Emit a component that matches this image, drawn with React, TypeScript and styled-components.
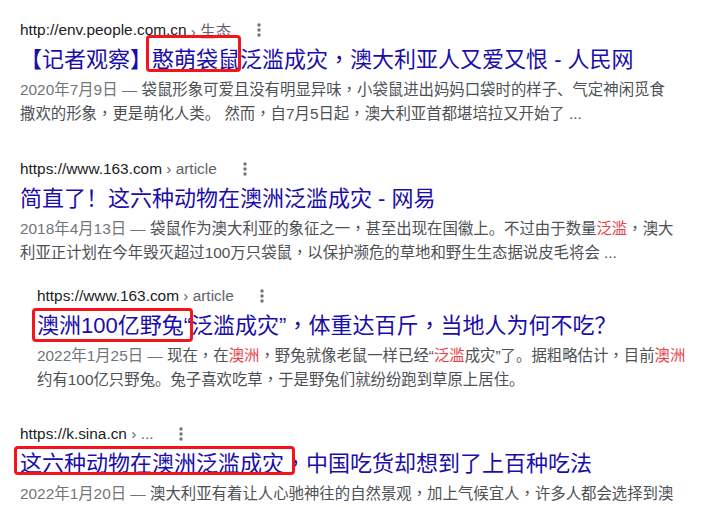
import React from 'react';
import styled, { createGlobalStyle } from 'styled-components';

const GlobalStyle = createGlobalStyle`
  html, body {
    margin: 0;
    padding: 0;
    background: #fff;
    overflow: hidden;
  }
  body {
    font-family: "Liberation Sans", Arial, "Noto Sans CJK SC", sans-serif;
  }
`;

const Page = styled.div`
  padding: 17px 0 0 20px;
  width: 718px;
  height: 507px;
  box-sizing: border-box;
  overflow: hidden;
`;

const Result = styled.div<{ $top: number; $indent?: number }>`
  margin-top: ${({ $top }) => $top}px;
  margin-left: ${({ $indent }) => $indent || 0}px;
`;

const UrlRow = styled.div`
  display: flex;
  align-items: center;
  height: 26px;
  font-size: 15.4px;
  white-space: nowrap;
`;

const Site = styled.span`
  color: #202124;
`;

const Crumb = styled.span`
  color: #5f6368;
`;

const Kebab = styled.span`
  display: inline-flex;
  margin-left: 22px;
  width: 12px;
  justify-content: center;
  color: #70757a;
`;

const Title = styled.div`
  font-size: 22px;
  line-height: 33px;
  height: 33px;
  color: #1a0dab;
  white-space: nowrap;
`;

const Mark = styled.span`
  position: relative;
  display: inline-block;
`;

const Box = styled.span<{ $t: number; $r: number; $b: number; $l: number }>`
  position: absolute;
  top: ${({ $t }) => $t}px;
  right: ${({ $r }) => $r}px;
  bottom: ${({ $b }) => $b}px;
  left: ${({ $l }) => $l}px;
  border: 3px solid #f4141c;
  border-radius: 4px;
  pointer-events: none;
`;

const Snippet = styled.div`
  margin-top: 2px;
  font-size: 15.4px;
  line-height: 24px;
  color: #4d5156;
`;

const Line = styled.div`
  white-space: nowrap;
  height: 24px;
`;

const Date = styled.span`
  color: #70757a;
`;

const Em = styled.span`
  color: #e8434b;
`;

// full-width comma sits centred in the cell in the reference
const Comma = styled.span`
  font-family: "Noto Sans CJK TC", sans-serif;
  line-height: 1;
`;

const cjk = (text: string) =>
  text.split('，').flatMap((part, i) =>
    i === 0 ? [part] : [<Comma key={i}>，</Comma>, part]
  );

const MoreIcon = () => (
  <svg width="4" height="14" viewBox="0 0 4 14" fill="currentColor">
    <circle cx="2" cy="2" r="1.7" />
    <circle cx="2" cy="7" r="1.7" />
    <circle cx="2" cy="12" r="1.7" />
  </svg>
);

const Url: React.FC<{ site: string; crumb: string }> = ({ site, crumb }) => (
  <UrlRow>
    <Site>{site}</Site>
    <Crumb>&nbsp;› {crumb}</Crumb>
    <Kebab>
      <MoreIcon />
    </Kebab>
  </UrlRow>
);

const App: React.FC = () => (
  <>
    <GlobalStyle />
    <Page>
      <Result $top={0}>
        <Url site="http://env.people.com.cn" crumb="生态" />
        <Title>
          【记者观察】
          <Mark>
            憨萌袋鼠
            <Box $t={-8} $r={-1} $b={4} $l={-6} />
          </Mark>
          {cjk('泛滥成灾，澳大利亚人又爱又恨 - 人民网')}
        </Title>
        <Snippet>
          <Line>
            <Date>2020年7月9日 — </Date>
            {cjk('袋鼠形象可爱且没有明显异味，小袋鼠进出妈妈口袋时的样子、气定神闲觅食')}
          </Line>
          <Line>{cjk('撒欢的形象，更是萌化人类。 然而，自7月5日起，澳大利亚首都堪培拉又开始了 ...')}</Line>
        </Snippet>
      </Result>

      <Result $top={30}>
        <Url site="https://www.163.com" crumb="article" />
        <Title>简直了！这六种动物在澳洲泛滥成灾 - 网易</Title>
        <Snippet>
          <Line>
            <Date>2018年4月13日 — </Date>
            {cjk('袋鼠作为澳大利亚的象征之一，甚至出现在国徽上。不过由于数量')}
            <Em>泛滥</Em>
            {cjk('，澳大')}
          </Line>
          <Line>{cjk('利亚正计划在今年毁灭超过100万只袋鼠，以保护濒危的草地和野生生态据说皮毛将会 ...')}</Line>
        </Snippet>
      </Result>

      <Result $top={18} $indent={17}>
        <Url site="https://www.163.com" crumb="article" />
        <Title>
          <Mark>
            澳洲100亿野兔
            <Box $t={-1} $r={-9} $b={0} $l={-5} />
          </Mark>
          {cjk('“泛滥成灾”，体重达百斤，当地人为何不吃？')}
        </Title>
        <Snippet>
          <Line>
            <Date>2022年1月25日 — </Date>
            现在<Comma>，</Comma>在<Em>澳洲</Em><Comma>，</Comma>野兔就像老鼠一样已经“<Em>泛滥</Em>
            {cjk('成灾”了。据粗略估计，目前')}
            <Em>澳洲</Em>
          </Line>
          <Line>{cjk('约有100亿只野兔。兔子喜欢吃草，于是野兔们就纷纷跑到草原上居住。')}</Line>
        </Snippet>
      </Result>

      <Result $top={29}>
        <Url site="https://k.sina.cn" crumb="..." />
        <Title>
          <Mark>
            这六种动物在澳洲泛滥成灾
            <Box $t={-1} $r={-11} $b={5} $l={-6} />
          </Mark>
          {cjk('，中国吃货却想到了上百种吃法')}
        </Title>
        <Snippet>
          <Line>
            <Date>2022年1月20日 — </Date>
            {cjk('澳大利亚有着让人心驰神往的自然景观，加上气候宜人，许多人都会选择到澳')}
          </Line>
        </Snippet>
      </Result>
    </Page>
  </>
);

export default App;
